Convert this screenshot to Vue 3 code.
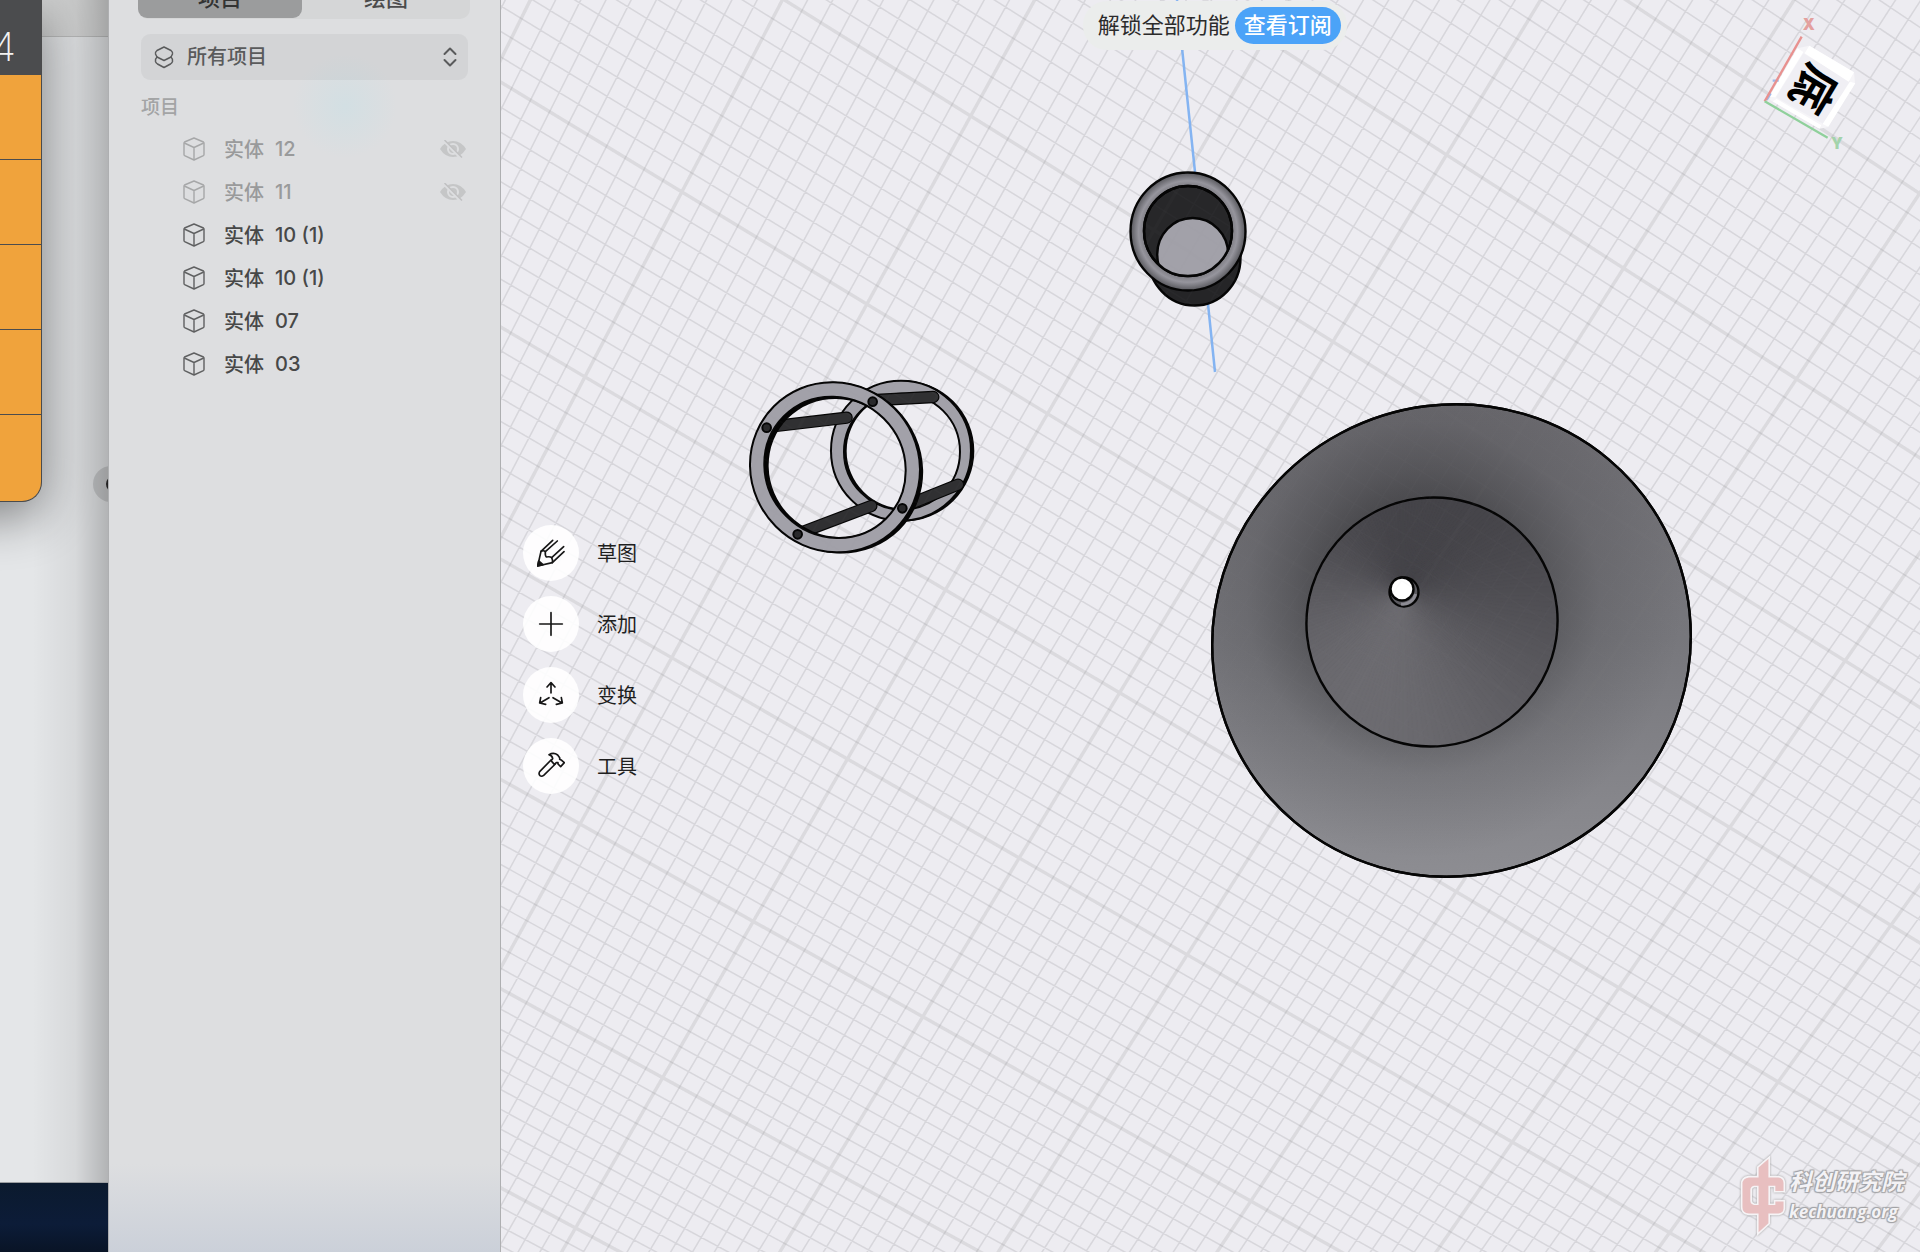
<template>
  <div class="screen">
    <div class="desktop">
      <div class="browser">
        <div class="browser-bar"></div>
        <div class="browser-page"></div>
      </div>
      <div class="wallpaper"></div>
      <div class="calculator">
        <output class="calc-display">4</output>
        <button v-for="key in calcKeys" :key="key.name" class="calc-key" :aria-label="key.name">{{ key.label }}</button>
      </div>
      <button class="page-arrow" aria-label="next"><span></span></button>
    </div>

    <aside class="sidebar">
      <div class="tabs" role="tablist">
        <button
          v-for="tab in tabs"
          :key="tab"
          class="tab"
          :class="{ active: tab === activeTab }"
          role="tab"
          :aria-selected="tab === activeTab"
          @click="activeTab = tab"
        >
          {{ tab }}
        </button>
      </div>

      <div class="filter">
        <svg class="filter-icon" viewBox="0 0 20 24">
          <path d="M10 2 L17 5.500 Q19 7 18.500 9 L17 12 L10 15.500 L3 12 L1.500 9 Q1 7 3 5.500 Z" />
          <path d="M3 12 Q1 14 1.500 16.500 Q2 18 3.500 19 L10 22.500 L16.500 19 Q18 18 18.500 16.500 Q19 14 17 12" />
        </svg>
        <select v-model="filter" aria-label="项目">
          <option>所有项目</option>
        </select>
        <svg class="filter-arrows" viewBox="0 0 14 20">
          <path d="M1.500 7 L7 1.500 L12.500 7 M1.500 13 L7 18.500 L12.500 13" />
        </svg>
      </div>

      <h2 class="section">项目</h2>
      <ul class="bodies">
        <li v-for="(body, index) in bodies" :key="index" class="body" :class="{ hidden: body.hidden }">
          <svg class="cube" viewBox="0 0 22 24">
            <path d="M11 1 L20.500 5 Q21 5.300 21 6 V17.500 Q21 18.300 20.400 18.600 L11 23 L1.600 18.600 Q1 18.300 1 17.500 V6 Q1 5.300 1.500 5 Z" />
            <path d="M1.300 6 L11 10.500 L20.700 6 M11 10.500 V23" />
          </svg>
          <span>实体</span>
          <span class="number">{{ body.number }}</span>
          <button v-if="body.hidden" class="eye" aria-label="show" @click="body.hidden = false">
            <svg viewBox="0 0 26 18">
              <path class="lid" d="M0 9 Q5 1 13 1 Q21 1 26 9 Q21 17 13 17 Q5 17 0 9 Z" />
              <circle class="iris" cx="13" cy="9" r="5" />
              <path class="slash-gap" d="M3 0 L22 19" />
              <path class="slash" d="M4.500 0 L22 17.500" />
            </svg>
          </button>
        </li>
      </ul>
    </aside>

    <main class="viewport">
      <svg class="scene" viewBox="501 0 1419 1252" preserveAspectRatio="xMidYMid slice">
        <defs>
          <linearGradient id="bowl" x1="0" y1="0" x2="0" y2="1" gradientTransform="rotate(28 0.5 0.5)">
            <stop offset="0" stop-color="#6e6d72" />
            <stop offset="0.500" stop-color="#77777c" />
            <stop offset="1" stop-color="#8d8d92" />
          </linearGradient>
          <radialGradient id="bowlShade" gradientUnits="userSpaceOnUse" cx="1446" cy="590" r="260">
            <stop offset="0.350" stop-color="#101012" stop-opacity="0.430" />
            <stop offset="0.500" stop-color="#101012" stop-opacity="0.270" />
            <stop offset="0.680" stop-color="#101012" stop-opacity="0.110" />
            <stop offset="1" stop-color="#101012" stop-opacity="0" />
          </radialGradient>
          <radialGradient id="rim">
            <stop offset="0.740" stop-color="#77767c" />
            <stop offset="0.860" stop-color="#96959d" />
            <stop offset="1" stop-color="#58585d" />
          </radialGradient>
          <clipPath id="coneClip">
            <ellipse cx="1432" cy="622" rx="126" ry="124" transform="rotate(-28 1432 622)" />
          </clipPath>
          <clipPath id="cupClip">
            <ellipse cx="1188" cy="231" rx="44.500" ry="45.500" />
          </clipPath>
          <g id="grid" fill="none" stroke="#8c8c92">
            <path :d="grid.minor" stroke-width="1.500" stroke-opacity="0.190" />
            <path :d="grid.major" stroke-width="3.400" stroke-opacity="0.160" />
          </g>
        </defs>

        <use href="#grid" />
        <path class="axis" d="M1177 0 L1195 172 M1208 304 L1215 372" />

        <!-- cup -->
        <g class="outline">
          <ellipse cx="1194.500" cy="258" rx="46" ry="47.500" fill="#252527" />
          <ellipse cx="1188" cy="231.500" rx="57.500" ry="59" fill="url(#rim)" />
          <ellipse cx="1188" cy="231" rx="44" ry="45" fill="#272729" />
          <ellipse cx="1192.700" cy="254.500" rx="35.500" ry="36.500" fill="#a2a1a9" clip-path="url(#cupClip)" />
          <ellipse cx="1188" cy="231" rx="44" ry="45" fill="none" />
        </g>

        <!-- cage: back ring, rods, front ring -->
        <g transform="translate(730 360) scale(0.3333)">
          <path :d="ring(519, 273, 214, 212, 523, 273, 173, 173, 0)" fill="#050505" fill-rule="evenodd" />
          <path :d="ring(513, 272, 210, 210, 516, 275, 174, 174, 0)" class="face" />
          <g v-for="(rod, index) in rods" :key="index">
            <path :d="rod" class="rod-edge" />
            <path :d="rod" class="rod" />
          </g>
          <path :d="ring(322, 323, 264, 251, 323, 324, 211, 203, 45)" fill="#050505" fill-rule="evenodd" />
          <path :d="ring(315, 322, 259, 251, 315, 322, 217, 207, 45)" class="face" />
          <circle v-for="peg in pegs" :key="peg[0]" :cx="peg[0]" :cy="peg[1]" r="13" class="peg" />
        </g>

        <!-- funnel -->
        <g class="outline">
          <ellipse cx="1451.500" cy="640.500" rx="240.500" ry="235" transform="rotate(-28 1451.500 640.500)" fill="url(#bowl)" />
          <ellipse cx="1451.500" cy="640.500" rx="240.500" ry="235" transform="rotate(-28 1451.500 640.500)" fill="url(#bowlShade)" />
          <g clip-path="url(#coneClip)">
            <path v-for="wedge in wedges" :key="wedge.d" :d="wedge.d" :fill="wedge.color" :stroke="wedge.color" stroke-width="1" />
          </g>
          <ellipse cx="1432" cy="622" rx="126" ry="124" transform="rotate(-28 1432 622)" fill="none" />
          <circle cx="1404" cy="592" r="14.500" fill="#5b5a5f" />
          <path d="M1415.500 594 A13 13 0 0 1 1401 604" fill="none" stroke="#8d8c94" stroke-width="3" />
          <circle cx="1402" cy="589" r="11.500" fill="#fff" />
        </g>
        <use href="#grid" opacity="0.200" />
      </svg>

      <div class="unlock">
        <span>解锁全部功能</span>
        <button>查看订阅</button>
      </div>

      <nav class="tools">
        <button v-for="tool in tools" :key="tool.name" class="tool">
          <span class="tool-icon">
            <svg viewBox="0 0 84 84">
              <path v-for="d in tool.paths" :key="d" :d="d" />
              <path v-if="tool.tip" class="tip" :d="tool.tip" />
            </svg>
          </span>
          <span>{{ tool.name }}</span>
        </button>
      </nav>

      <svg class="orientation" viewBox="0 0 600 540">
        <path d="M268 137 L402 217 L405 250 L322 382 L298 386 L150 300 L152 285 L232 145 Z" fill="#f6f5f8" />
        <path d="M250 160 L390 243 L310 372 L168 292 Z" fill="#f0eff4" />
        <path d="M268 137 L402 217 L386 245 L254 160 Z M390 245 L406 250 L325 380 L308 372 Z M170 297 L304 376 L298 386 L158 304 Z M232 145 L250 156 L166 292 L148 290 Z" fill="#fff" />
        <path d="M158 242 H176 M152 280 L140 300" stroke="#9cb8ea" stroke-width="7" />
        <path d="M245 110 L134 304" stroke="#e8918f" stroke-width="7" />
        <path d="M134 304 L323 413" stroke="#8fd09b" stroke-width="7" />
        <text class="face-name" transform="translate(281 267) rotate(121)" y="50">底</text>
        <text class="axis-name" x="266" y="90" fill="#e3a09e">X</text>
        <text class="axis-name" x="351" y="446" fill="#a3d3ab">Y</text>
      </svg>

      <div class="watermark">
        <svg viewBox="60 65 146 252">
          <path
            fill-rule="evenodd"
            d="M152 76 L117 106 V135 H90 Q68 137 68 158 V228 Q68 248 90 250 H117 V310 L152 278 V250 H180 Q197 248 198 232 V208 H168 V219 H152 V165 H168 V181 H198 V154 Q197 137 180 135 H152 Z M117 165 V219 H106 Q97 217 97 208 V176 Q97 167 106 165 Z"
          />
        </svg>
        <div>
          <p class="mark-name">科创研究院</p>
          <p class="mark-site">kechuang.org</p>
        </div>
      </div>
    </main>
  </div>
</template>

<script setup>
import { reactive, ref } from "vue";

const tabs = ["项目", "绘图"];
const activeTab = ref("项目");
const filter = ref("所有项目");

const bodies = reactive([
  { number: "12", hidden: true },
  { number: "11", hidden: true },
  { number: "10 (1)", hidden: false },
  { number: "10 (1)", hidden: false },
  { number: "07", hidden: false },
  { number: "03", hidden: false },
]);

const calcKeys = [
  { name: "divide", label: "÷" },
  { name: "multiply", label: "" },
  { name: "subtract", label: "" },
  { name: "add", label: "" },
  { name: "equals", label: "" },
];

const tools = [
  {
    name: "草图",
    paths: [
      "M47 4 L12 37 L2 81 L46 71 L81 38",
      "M12 37 Q20 33 25 38 Q24 50 28 54 Q40 52 44 56 Q48 62 46 71",
      "M25 38 L61 6",
      "M44 56 L80 23",
    ],
    tip: "M5 66 L2 81 L18 77 Z",
  },
  { name: "添加", paths: ["M8 42 H76", "M42 8 V76"] },
  {
    name: "变换",
    paths: [
      "M42 36 V6 M30 18 L42 5 L54 18",
      "M36 50 L9 66 M11 50 L8 66 L26 70",
      "M48 50 L75 66 M73 50 L76 66 L58 70",
    ],
  },
  {
    name: "工具",
    paths: [
      "M42 24 L8 59 Q4 66 9 71 Q14 75 20 70 L55 36",
      "M36 8 Q50 0 62 9 L68 17 V22 L74 25 L82 32 L71 44 L63 36 V32 H58 L52 37 L42 26 L47 20 Q46 11 36 8 Z",
    ],
  },
];

/* floor grid in perspective, u / v are counted in large cells */

function project(u, v) {
  const s = (u - 1) / 2;
  const t = (v + 1) / 4;
  const w = 1 + 0.02434 * s + 0.086 * t;
  const x = (970.7 + 394.7 * s - 340.8 * t) / w;
  const y = (116 + 234 * s + 778.9 * t) / w;
  return x.toFixed(1) + " " + y.toFixed(1);
}

function buildGrid() {
  const lines = { minor: "", major: "" };
  for (let n = -30; n <= 130; n++) {
    lines[n % 10 === 0 ? "major" : "minor"] += "M" + project(n / 10, -8) + "L" + project(n / 10, 9);
  }
  for (let n = -80; n <= 90; n++) {
    lines[n % 10 === 0 ? "major" : "minor"] += "M" + project(-3, n / 10) + "L" + project(13, n / 10);
  }
  return lines;
}

const grid = buildGrid();

/* cone inside the funnel is shaded by slices around its tip */

const wedges = [];
for (let a = 0; a < 360; a += 2) {
  const from = (a * Math.PI) / 180;
  const to = ((a + 2) * Math.PI) / 180;
  const tone = (1 - Math.cos(from - 0.3)) / 2;
  const g = Math.round(69 + 39 * Math.pow(tone, 1.3));
  const point = (r) => (1403 + 300 * Math.sin(r)).toFixed(1) + " " + (592 - 300 * Math.cos(r)).toFixed(1);
  wedges.push({
    d: "M1403 592 L" + point(from) + " L" + point(to) + " Z",
    color: `rgb(${g}, ${g - 1}, ${g + 4})`,
  });
}

function ellipse(cx, cy, rx, ry, angle) {
  const rad = (angle * Math.PI) / 180;
  const dx = rx * Math.cos(rad);
  const dy = rx * Math.sin(rad);
  const arc = `A${rx} ${ry} ${angle} 1 1 `;
  return `M${cx - dx} ${cy - dy} ${arc}${cx + dx} ${cy + dy} ${arc}${cx - dx} ${cy - dy} Z`;
}

function ring(ox, oy, orx, ory, ix, iy, irx, iry, angle) {
  return ellipse(ox, oy, orx, ory, angle) + ellipse(ix, iy, irx, iry, angle);
}

const rods = [
  "M120 200 L350 173",
  "M440 120 L610 111",
  "M212 518 L424 438",
  "M525 438 L684 374",
];

const pegs = [
  [110, 203],
  [428, 125],
  [203, 523],
  [517, 445],
];
</script>

<style>
body {
  margin: 0;
}
</style>

<style scoped>
.screen {
  display: flex;
  min-height: 100vh;
  overflow: hidden;
  font-family: Inter, "Noto Sans CJK SC", sans-serif;
  font-size: 20px;
  background: #edecf1;
}

button,
select {
  border: 0;
  padding: 0;
  background: none;
  font: inherit;
  color: inherit;
  cursor: pointer;
}

/* windows behind */

.desktop {
  position: relative;
  display: flex;
  flex-direction: column;
  flex: 0 0 108px;
  overflow: hidden;
}

.browser {
  display: flex;
  flex-direction: column;
  flex: 1;
  background: #e4e6e8;
  border-bottom: 1px solid #9c9fa2;
}

.browser-bar {
  height: 36px;
  background: #d4d5d5;
  border-bottom: 1px solid #bcbdbd;
}

.browser-page {
  flex: 1;
}

.wallpaper {
  height: 69px;
  background: linear-gradient(#0b1a2e, #0c1c38 60%, #091426);
}

.browser::after {
  content: "";
  position: absolute;
  inset: 0 0 70px;
  background: linear-gradient(to right, rgba(0, 0, 0, 0) 30%, rgba(0, 0, 0, 0.06) 70%, rgba(0, 0, 0, 0.22));
}

.calculator {
  position: absolute;
  z-index: 1;
  top: 0;
  left: -200px;
  width: 242px;
  box-sizing: border-box;
  border-right: 1px solid #4b4b4c;
  border-bottom: 1px solid #4b4b4c;
  border-radius: 0 0 20px 0;
  background: #4b4c4e;
  box-shadow: 0 14px 50px rgba(0, 0, 0, 0.45);
  overflow: hidden;
}

.calc-display {
  display: block;
  height: 75px;
  padding: 19px 25px 0 0;
  box-sizing: border-box;
  color: #f2f2f2;
  font-size: 40px;
  font-weight: 200;
  line-height: 56px;
  text-align: right;
}

.calc-key {
  display: block;
  width: 100%;
  height: 84px;
  padding-right: 40px;
  margin-bottom: 1px;
  background: #f0a33c;
  color: #fff;
  font-size: 36px;
  text-align: right;
}

.calc-key:last-child {
  height: 86px;
  margin-bottom: 0;
}

.page-arrow {
  position: absolute;
  top: 466px;
  left: 93px;
  width: 36px;
  height: 36px;
  border-radius: 50%;
  background: rgba(0, 0, 0, 0.12);
}

.page-arrow span {
  display: block;
  width: 12px;
  height: 14px;
  margin-left: 13px;
  border-radius: 50%;
  background: #222;
}

/* sidebar */

.sidebar {
  flex: 0 0 332px;
  padding: 0 30px 0 29px;
  border: solid #aeafb1;
  border-width: 0 1px;
  background:
    radial-gradient(circle at 236px 106px, rgba(200, 224, 230, 0.5), rgba(200, 224, 230, 0) 52px),
    linear-gradient(to top, #cbd0d9, rgba(221, 222, 224, 0) 88px),
    #dddee0;
}

.tabs {
  display: flex;
  height: 42px;
  margin-top: -23px;
  padding: 0 0 1px;
  box-sizing: border-box;
  border-radius: 10px;
  background: #d5d6d7;
}

.tab {
  flex: 1;
  border-radius: 9px;
  font-size: 22px;
  font-weight: 500;
  line-height: 40px;
  color: #4b4b4c;
}

.tab.active {
  flex: 0 0 164px;
  background: #9b9c9d;
  color: #333;
}

.filter {
  position: relative;
  margin: 15px 2px 0 3px;
}

.filter select {
  appearance: none;
  display: block;
  width: 100%;
  height: 46px;
  padding-left: 46px;
  border-radius: 9px;
  background: rgba(0, 0, 0, 0.045);
  color: #5a5b5c;
  font-weight: 500;
}

.filter svg {
  position: absolute;
  fill: none;
  stroke: #5a5b5c;
  stroke-linejoin: round;
  stroke-linecap: round;
  pointer-events: none;
}

.filter-icon {
  top: 11px;
  left: 13px;
  width: 20px;
  height: 24px;
  stroke-width: 1.5;
}

.filter-arrows {
  top: 13px;
  right: 11px;
  width: 14px;
  height: 20px;
  stroke-width: 2;
}

.section {
  margin: 14px 3px 5px;
  color: #a3a4a5;
  font-size: 19px;
  font-weight: 500;
  line-height: 28px;
}

.bodies {
  margin: 0 3px;
  padding: 0;
  list-style: none;
}

.body {
  display: flex;
  align-items: center;
  height: 43px;
  padding-left: 42px;
  color: #474848;
  font-weight: 500;
}

.cube {
  width: 22px;
  height: 24px;
  margin-right: 19px;
  fill: none;
  stroke: #5f6061;
  stroke-width: 1.4;
  stroke-linejoin: round;
}

.number {
  margin-left: 11px;
}

.body.hidden {
  color: #999a9b;
}

.hidden .cube {
  stroke: #a6a7a8;
}

.eye {
  display: flex;
  margin-left: auto;
  margin-right: 1px;
}

.eye svg {
  width: 26px;
  height: 18px;
}

.lid {
  fill: #c5c6c7;
}

.iris {
  fill: none;
  stroke: #dddee0;
  stroke-width: 2;
}

.slash-gap {
  stroke: #dddee0;
  stroke-width: 3;
}

.slash {
  stroke: #c0c1c2;
  stroke-width: 1.5;
}

/* viewport */

.viewport {
  position: relative;
  flex: 1;
  overflow: hidden;
}

.scene {
  position: absolute;
  inset: 0;
  width: 100%;
  height: 100%;
}

.axis {
  fill: none;
  stroke: #84b4f2;
  stroke-width: 2.5;
}

.outline {
  stroke: #050505;
  stroke-width: 2.4;
}

.face {
  fill: #a2a1a9;
  fill-rule: evenodd;
  stroke: #050505;
  stroke-width: 6;
}

.rod,
.rod-edge {
  stroke: #050505;
  stroke-width: 37;
  stroke-linecap: round;
}

.rod {
  stroke: #303032;
  stroke-width: 30;
}

.peg {
  fill: #29292b;
  stroke: #050505;
  stroke-width: 6;
}

.unlock {
  position: absolute;
  top: 1px;
  left: 41%;
  display: flex;
  align-items: center;
  gap: 5px;
  height: 49px;
  padding: 0 6px 0 15px;
  border-radius: 24px;
  background: #ebedec;
  color: #2b2b2b;
  font-size: 22px;
  line-height: 30px;
  white-space: nowrap;
}

.unlock span {
  padding-bottom: 2px;
}

.unlock button {
  height: 37px;
  padding: 0 9px 2px;
  border-radius: 19px;
  background: #4ba3f8;
  color: #fff;
  font-weight: 500;
}

.tools {
  position: absolute;
  top: 42%;
  left: 22px;
  display: flex;
  flex-direction: column;
  gap: 15px;
  margin-top: -1px;
}

.tool {
  display: flex;
  align-items: center;
  gap: 18px;
  color: #1f1f1f;
}

.tool-icon {
  display: flex;
  align-items: center;
  justify-content: center;
  width: 56px;
  height: 56px;
  border-radius: 50%;
  background: rgba(255, 255, 255, 0.9);
}

.tool-icon svg {
  width: 28px;
  height: 28px;
  fill: none;
  stroke: #161616;
  stroke-width: 5;
  stroke-linecap: round;
  stroke-linejoin: round;
}

.tool-icon .tip {
  fill: #161616;
}

.orientation {
  position: absolute;
  top: 0;
  right: 0;
  width: 200px;
  height: 180px;
}

.face-name {
  font-size: 138px;
  font-weight: 700;
  text-anchor: middle;
}

.axis-name {
  font-size: 46px;
  font-weight: 900;
  text-anchor: middle;
}

.watermark {
  position: absolute;
  right: 16px;
  bottom: 15px;
  display: flex;
  align-items: center;
  gap: 2px;
}

.watermark svg {
  width: 48px;
  height: 84px;
  fill: #e8bfc0;
  stroke: #f6f4f6;
  stroke-width: 5;
  filter: drop-shadow(0 0 1px #999);
}

.watermark p {
  margin: 0;
  color: #f3f2f5;
  font-weight: 700;
  font-style: italic;
  text-shadow:
    1px 1px 1px #a2a2a5,
    -1px 1px 1px #a2a2a5,
    1px -1px 1px #a2a2a5,
    -1px -1px 1px #a2a2a5;
}

.mark-name {
  font-size: 23px;
  line-height: 34px;
}

.mark-site {
  font-family: "Open Sans", sans-serif;
  font-size: 17px;
  line-height: 26px;
}
</style>
